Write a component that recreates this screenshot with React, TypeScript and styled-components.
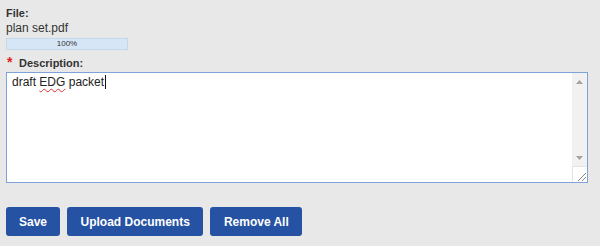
import styled, { createGlobalStyle } from "styled-components";

const GlobalStyle = createGlobalStyle`
  html, body {
    margin: 0;
    padding: 0;
    background: #e8e8e8;
  }
  body {
    font-family: "Liberation Sans", Arial, sans-serif;
    color: #222;
  }
`;

const Page = styled.div`
  display: flex;
  flex-direction: column;
  padding: 7px 6px 0 6px;
  width: 582px;
`;

const Label = styled.div`
  font-size: 11px;
  font-weight: bold;
  line-height: 13px;
  color: #333;
`;

const FileName = styled.div`
  font-size: 12px;
  line-height: 14px;
  margin-top: 1px;
  color: #333;
`;

const Progress = styled.div`
  margin-top: 3px;
  width: 120px;
  height: 10px;
  border: 1px solid #c5d7ea;
  background: #d6e6f6;
  font-size: 8px;
  line-height: 10px;
  text-align: center;
  color: #333;
`;

const DescLabel = styled(Label)`
  margin-top: 6px;
  display: flex;
  align-items: baseline;
`;

const Star = styled.span`
  color: #e02020;
  font-size: 14px;
  line-height: 13px;
  width: 12px;
  padding-left: 1px;
`;

const TextBox = styled.div`
  margin-top: 2px;
  height: 109px;
  border: 1px solid #7fa3d8;
  background: #fff;
  display: flex;
`;

const TextContent = styled.div`
  flex: 1;
  padding: 1px 5px;
  font-size: 12px;
  line-height: 16px;
  color: #222;
`;

const Misspelled = styled.span`
  text-decoration: underline wavy #e03030;
  text-decoration-thickness: 1px;
  text-underline-offset: 2px;
`;

const Caret = styled.span`
  border-right: 1px solid #111;
  margin-left: 1px;
`;

const ScrollBar = styled.div`
  width: 15px;
  display: flex;
  flex-direction: column;
  background: #f1f1f1;
`;

const Arrow = styled.div`
  height: 17px;
  display: flex;
  align-items: center;
  justify-content: center;
`;

const Track = styled.div`
  flex: 1;
`;

const Corner = styled.div`
  height: 15px;
  background: #fff;
  border-left: 1px solid #e2e2e2;
  border-top: 1px solid #e2e2e2;
  display: flex;
  align-items: flex-end;
  justify-content: flex-end;
`;

const ButtonRow = styled.div`
  display: flex;
  gap: 7px;
  margin-top: 24px;
`;

const Button = styled.button<{ $pad?: number }>`
  height: 29px;
  padding: 0 ${(p) => p.$pad ?? 13}px;
  border: none;
  border-radius: 3px;
  background: #2552a3;
  color: #fff;
  font-family: "Liberation Sans", Arial, sans-serif;
  font-size: 12px;
  font-weight: bold;
`;

function Tri({ up }: { up?: boolean }) {
  return (
    <svg width="7" height="4" viewBox="0 0 7 4">
      <path d={up ? "M0 4 L3.5 0 L7 4 Z" : "M0 0 L3.5 4 L7 0 Z"} fill="#a3a3a3" />
    </svg>
  );
}

export default function App() {
  return (
    <>
      <GlobalStyle />
      <Page>
        <Label>File:</Label>
        <FileName>plan set.pdf</FileName>
        <Progress>100%</Progress>
        <DescLabel>
          <Star>*</Star>
          <span>Description:</span>
        </DescLabel>
        <TextBox>
          <TextContent>
            draft <Misspelled>EDG</Misspelled> packet
            <Caret />
          </TextContent>
          <ScrollBar>
            <Arrow>
              <Tri up />
            </Arrow>
            <Track />
            <Arrow>
              <Tri />
            </Arrow>
            <Corner>
              <svg width="12" height="12" viewBox="0 0 12 12">
                <path d="M11 3 L3 11 M11 7 L7 11" stroke="#888" strokeWidth="1" />
              </svg>
            </Corner>
          </ScrollBar>
        </TextBox>
        <ButtonRow>
          <Button $pad={13}>Save</Button>
          <Button $pad={13.5}>Upload Documents</Button>
          <Button $pad={13.5}>Remove All</Button>
        </ButtonRow>
      </Page>
    </>
  );
}
